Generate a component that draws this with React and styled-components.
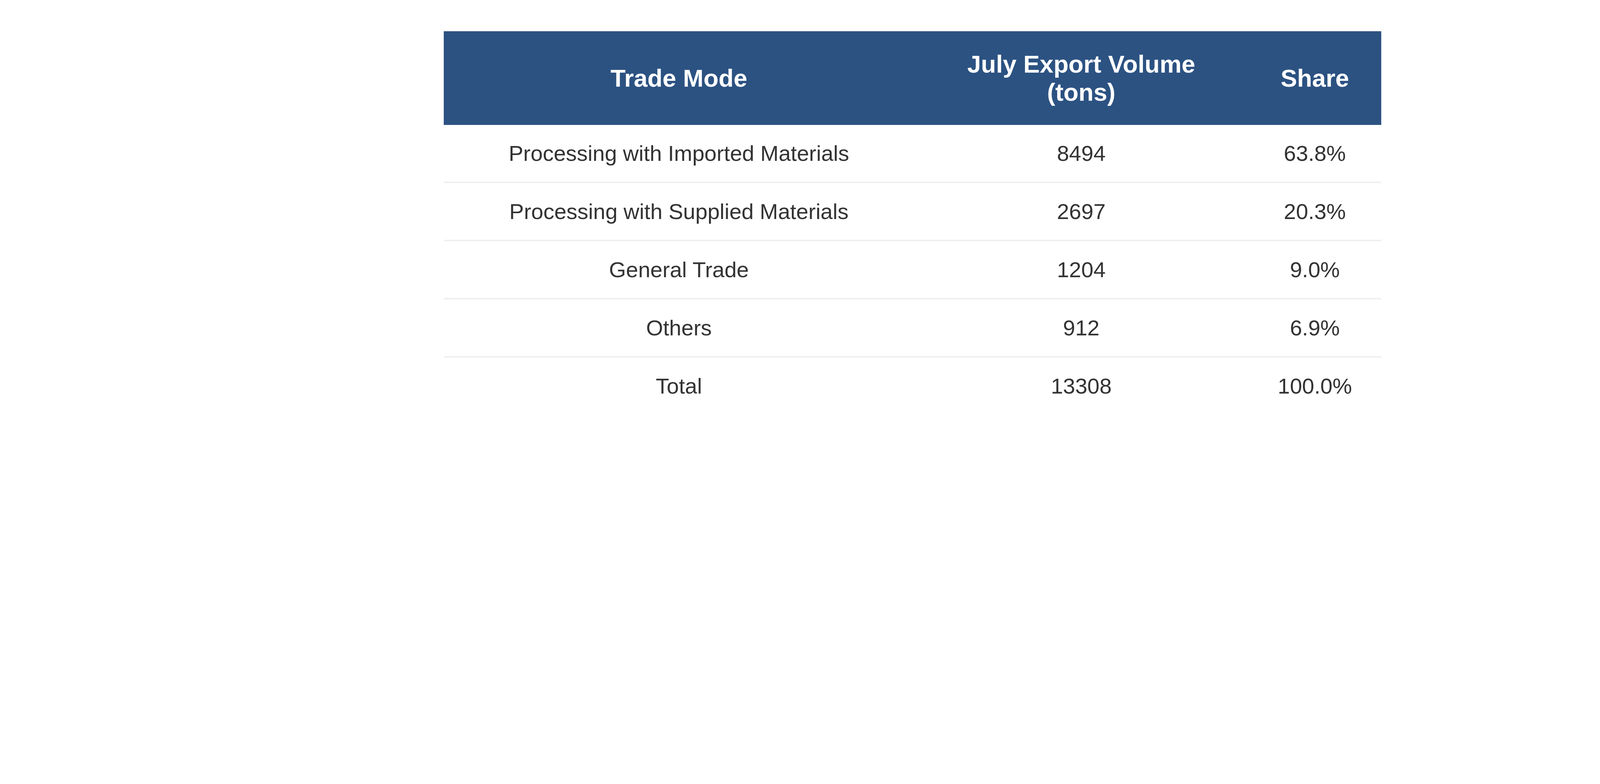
import React from 'react';
import styled, { createGlobalStyle } from 'styled-components';

const GlobalStyle = createGlobalStyle`
  html, body {
    margin: 0;
    padding: 0;
    background: #ffffff;
  }

  body {
    font-family: "Liberation Sans", Arial, sans-serif;
    color: #333333;
  }
`;

const rows = [
  { mode: 'Processing with Imported Materials', volume: '8494', share: '63.8%' },
  { mode: 'Processing with Supplied Materials', volume: '2697', share: '20.3%' },
  { mode: 'General Trade', volume: '1204', share: '9.0%' },
  { mode: 'Others', volume: '912', share: '6.9%' },
  { mode: 'Total', volume: '13308', share: '100.0%' },
];

const Page = styled.div`
  padding: 80px 0 0 1136px;
`;

const Table = styled.table`
  width: 2400px;
  border-collapse: collapse;
  table-layout: fixed;
`;

const Col = styled.col`
  width: ${(p) => p.$w}px;
`;

const HeadCell = styled.th`
  background-color: #2c5282;
  color: #ffffff;
  font-size: 63px;
  font-weight: 700;
  line-height: normal;
  text-align: center;
  padding: 48px 24px;
`;

const Row = styled.tr`
  border-bottom: ${(p) => (p.$last ? 'none' : '4px solid #f0f0f0')};
`;

const Cell = styled.td`
  font-size: 56px;
  line-height: normal;
  text-align: center;
  padding: 40px 24px;
  color: #333333;
`;

function App() {
  return (
    <Page>
      <GlobalStyle />
      <Table>
        <colgroup>
          <Col $w={1204} />
          <Col $w={856} />
          <Col $w={340} />
        </colgroup>
        <thead>
          <tr>
            <HeadCell>Trade Mode</HeadCell>
            <HeadCell>
              July Export Volume
              <br />
              (tons)
            </HeadCell>
            <HeadCell>Share</HeadCell>
          </tr>
        </thead>
        <tbody>
          {rows.map((r, i) => (
            <Row key={r.mode} $last={i === rows.length - 1}>
              <Cell>{r.mode}</Cell>
              <Cell>{r.volume}</Cell>
              <Cell>{r.share}</Cell>
            </Row>
          ))}
        </tbody>
      </Table>
    </Page>
  );
}

export default App;
